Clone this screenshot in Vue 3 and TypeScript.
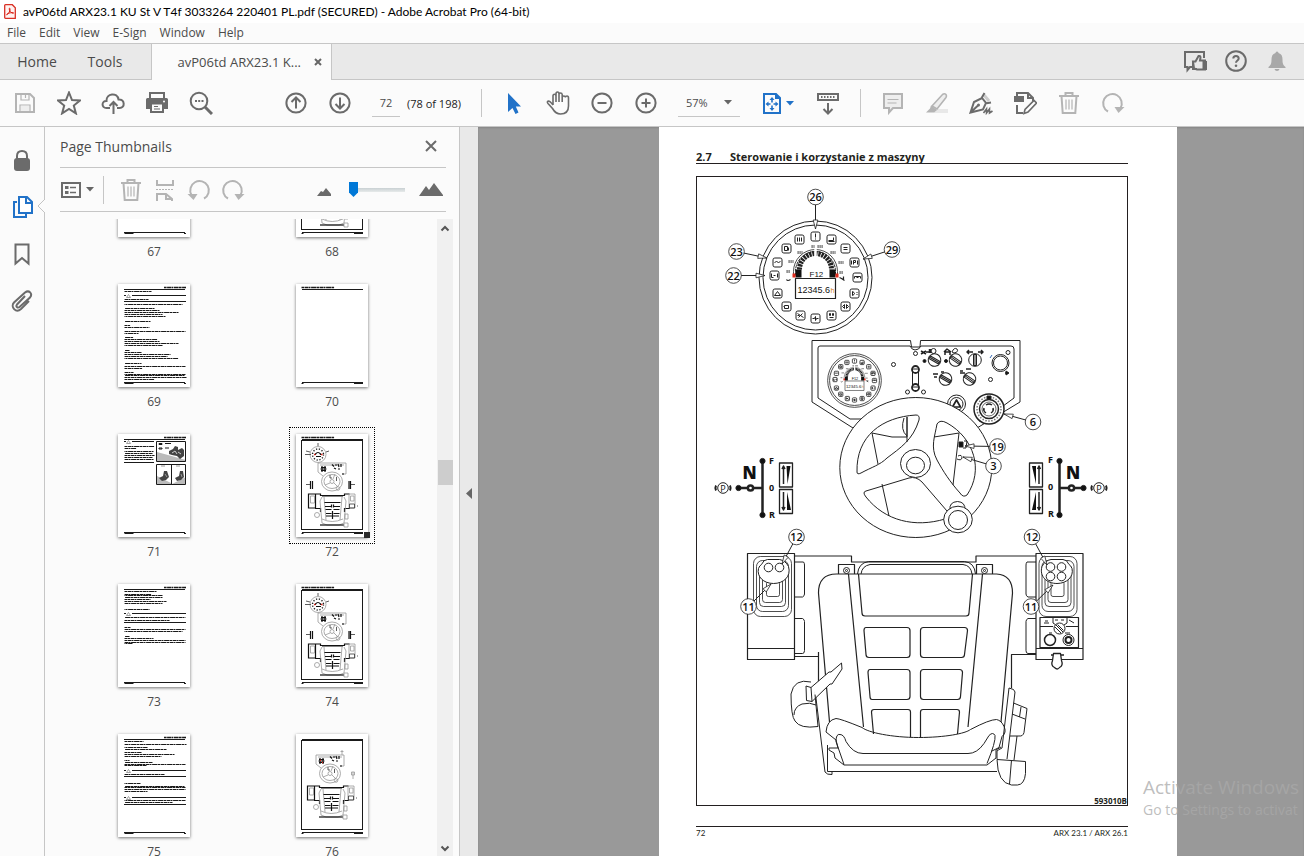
<script setup lang="ts">
import { ref } from 'vue'

interface Callout { n: number; x: number; y: number; tx: number; ty: number }
interface Row { y: number; w: number }
interface Thumb { page: number; kind: 'text' | 'blank' | 'controls' | 'controlsLow'; side: 'left' | 'right'; rows: Row[]; rules: number[]; warn: number[]; pictures?: boolean }

const menus = ['File', 'Edit', 'View', 'E-Sign', 'Window', 'Help']
const pageNumber = ref('72')
const zoom = ref('57%')
const thumbSize = ref(0)

const callouts: Callout[] = [
  { n: 26, x: 815.5, y: 197, tx: 815.5, ty: 229 },
  { n: 23, x: 736.5, y: 251.5, tx: 767, ty: 258 },
  { n: 22, x: 733.5, y: 275.5, tx: 765, ty: 275.5 },
  { n: 29, x: 892, y: 249.5, tx: 863, ty: 259 },
  { n: 6, x: 1033, y: 422, tx: 1004, ty: 414 },
  { n: 19, x: 997.5, y: 446.5, tx: 965, ty: 446 },
  { n: 3, x: 993.5, y: 466, tx: 963, ty: 457 },
  { n: 12, x: 796.5, y: 537, tx: 782, ty: 564 },
  { n: 11, x: 748.5, y: 606.5, tx: 771, ty: 584 },
  { n: 12, x: 1032, y: 537, tx: 1047, ty: 565 },
  { n: 11, x: 1031, y: 606.5, tx: 1053, ty: 585 },
]

function arrow(c: Callout): string {
  const dx = c.tx - c.x
  const dy = c.ty - c.y
  const len = Math.hypot(dx, dy)
  const ux = dx / len
  const uy = dy / len
  const bx = c.tx - ux * 9
  const by = c.ty - uy * 9
  return `${c.tx},${c.ty} ${bx - uy * 2.3},${by + ux * 2.3} ${bx + uy * 2.3},${by - ux * 2.3}`
}

const lamps = [
  [0, -41, 'M0-3v4M0 2v1'], [-16, -38, 'M-2-2v4M0-2v4M2-2v4'], [16, -38, 'M-3 1h5v-3M-3 2h6'], [-29, -29, 'M-2-2h3v4h-3zM2-1v3'],
  [30, -29, 'M-2-1h4M-2 1h4'], [-38, -15, 'M-3 0l2-1 2 1 2-1'], [39, -15, 'M-1-2v4M-1-2h2v2h-2M-3-2v4M3-2v4'], [-41, -2, 'M-3-2v4h2M3-2v4M-1 0h2'],
  [42, 0, 'M-3 1v-2h6v2M-1 0h2'], [-38, 16, 'M0-2l3 4h-6z'], [39, 16, 'M-2-2v4q4-2 0-4M2-1h1M2 1h1'], [-29, 29, 'M-3 0h1v2h4v-3h-4v1'],
  [30, 29, 'M-3 0l2-2v4zM3 0l-2-2v4z'], [-15, 38, 'M-3-2l6 4M-2 2l4-4M-3 0h2'], [16, 38, 'M-2-2h1v2h-1zM1-2h1v2h-1zM-2 2h4'], [0, 41, 'M-3 0h2l1-2v4l1-2h2'],
] as [number, number, string][]

const knobs: [number, number, number][] = [[934.5, 360, 30], [955.5, 360, 35], [975, 360, 90], [945.5, 379, 30], [969.5, 379, 35]]
const holes: [number, number][] = [[893.5, 364.5], [915.5, 353.5], [907.5, 392], [923.5, 392], [990.5, 379.5], [1008, 352.5]]

const many = (list: [number, number][]): Row[] => list.map(([y, w]) => ({ y, w }))

const thumbs: Thumb[] = [
  { page: 67, kind: 'blank', side: 'right', rows: [], rules: [], warn: [] },
  { page: 68, kind: 'controls', side: 'left', rows: [], rules: [], warn: [] },
  { page: 69, kind: 'text', side: 'right', rules: [17.5], warn: [11.5],
    rows: many([[7.5, 27], [15.5, 24], [20.5, 58], [24.5, 30], [26.5, 35], [28.5, 54], [30.5, 38], [32.5, 41], [37.5, 26], [41.5, 6], [43.5, 25], [47.5, 61], [49.5, 14], [53.5, 9], [55.5, 33], [57.5, 35], [59.5, 54], [61.5, 38], [66.5, 5], [68.5, 17], [70.5, 46], [72.5, 43], [74.5, 54], [79.5, 17], [82.5, 61], [84.5, 18], [88.5, 9], [90.5, 61], [91.5, 60], [93.5, 62], [95.5, 30]]) },
  { page: 70, kind: 'blank', side: 'left', rows: [], rules: [], warn: [] },
  { page: 71, kind: 'text', side: 'right', rules: [], warn: [7.5], pictures: true,
    rows: many([[12.5, 30], [14.5, 12], [17.5, 29], [19.5, 28], [21.5, 30], [23.5, 28], [25.5, 29]]) },
  { page: 72, kind: 'controls', side: 'left', rows: [], rules: [], warn: [] },
  { page: 73, kind: 'text', side: 'right', rules: [38.5], warn: [29.5],
    rows: many([[7.5, 32], [10.5, 27], [11.5, 38], [13.5, 38], [15.5, 26], [17.5, 42], [19.5, 38], [25.5, 25], [33.5, 61], [36.5, 45], [43.5, 6], [45.5, 61], [47.5, 58], [52.5, 5], [54.5, 29], [56.5, 61], [58.5, 61], [59.5, 8]]) },
  { page: 74, kind: 'controls', side: 'left', rows: [], rules: [], warn: [] },
  { page: 75, kind: 'text', side: 'right', rules: [42.5, 70.5], warn: [36.5, 63.5],
    rows: many([[7.5, 19], [10.5, 62], [13.5, 23], [15.5, 42], [18.5, 17], [20.5, 50], [22.5, 37], [26.5, 5], [28.5, 28], [30.5, 61], [31.5, 22], [40.5, 40], [49.5, 16], [52.5, 60], [53.5, 61], [55.5, 61], [57.5, 23], [66.5, 61], [68.5, 48]]) },
  { page: 76, kind: 'controlsLow', side: 'left', rows: [], rules: [], warn: [] },
]
</script>

<template>
  <div class="window">
    <header class="titlebar">
      <svg class="app-icon" viewBox="0 0 12 15"><path d="M1.5.7h6.8l3 3v10.6H1.5Q.7 14.300.7 13.500V1.500Q.7.7 1.500.7z" fill="#fff3f1" stroke="#d93025" stroke-width="1.300" /><path d="M3 10.500c2-1 3-3.500 3-5.500 0-1.500-1.300-1-.5 1 .8 2 2 3 3.500 3.300 1 .2.800-1-.7-.8-2 .2-4 .8-5 1.400-1 .600-.800 1.200-.3.600z" fill="none" stroke="#d91c10" stroke-width="1" /></svg>
      <h1>avP06td ARX23.1 KU St V T4f 3033264 220401 PL.pdf (SECURED) - Adobe Acrobat Pro (64-bit)</h1>
    </header>

    <nav class="menubar" aria-label="Menu">
      <button v-for="m in menus" :key="m" type="button">{{ m }}</button>
    </nav>

    <div class="tabs">
      <button type="button" class="tab home">Home</button>
      <button type="button" class="tab tools">Tools</button>
      <div class="tab-doc">
        <button type="button" class="tab-name">avP06td ARX23.1 K...</button>
        <button type="button" class="tab-close" aria-label="Close tab"><svg viewBox="0 0 8 8"><path d="M1 1l6 6M7 1L1 7" stroke="#666" stroke-width="2" /></svg></button>
      </div>
      <div class="tab-actions">
        <button type="button" aria-label="Feedback"><svg viewBox="0 0 24 24"><path d="M9 18H7l-2.500 3v-3H2V3h19v6" class="s" /><path d="M10 12v8h4M10 12.500h2.500l3-5.500q2-.5 2 1.500l-.5 3h5v9h-8l-3-1z" class="s on-bar" /><path d="M19.500 12H24v9h-4.500z" class="f" /></svg></button>
        <button type="button" aria-label="Help"><svg viewBox="0 0 24 24"><circle cx="12" cy="12" r="9.800" class="s" /><path d="M9.300 9.500c0-3.500 5.400-3.500 5.400 0 0 2-2.700 2-2.700 4.300" class="s" /><circle cx="12" cy="16.800" r="1.300" class="f" /></svg></button>
        <button type="button" aria-label="Notifications" class="off"><svg viewBox="0 0 24 24"><path d="M12 2.500q1.500 0 1.500 1.500c3 1 4 3 4 6.500 0 4 .5 5.500 3 7.500v1h-17v-1c2.500-2 3-3.500 3-7.500 0-3.500 1-5.500 4-6.500q0-1.500 1.500-1.500zM9.500 20h5q-.5 2-2.500 2t-2.500-2z" class="f" /></svg></button>
      </div>
    </div>

    <div class="toolbar">
      <div class="group">
        <button type="button" aria-label="Save" class="off"><svg viewBox="0 0 24 24"><path d="M3 3h14l4 4v14H3z" class="s" /><path d="M8 3v6h8V3M12.500 4v3M7 21v-7h10v7" class="s thin" /><path d="M8 15h8v5H8z" fill="#eee" /></svg></button>
        <button type="button" aria-label="Star"><svg viewBox="0 0 24 24"><path d="M12 1.500l3 7.500 8 .500-6.200 5.100 2.100 7.800L12 18l-6.900 4.400 2.100-7.800L1 9.500 9 9z" class="s" /></svg></button>
        <button type="button" aria-label="Upload"><svg viewBox="0 0 24 24"><path d="M9 17H5.500C0 17 .500 9.500 5.500 10 5 2 16.500 1 17.500 8.500 24 8 24.500 17 18.500 17H16M12.500 23V11M8.500 15l4-4 4 4" class="s" /></svg></button>
        <button type="button" aria-label="Print"><svg viewBox="0 0 24 24"><path d="M5 8V2h14v6" class="s" /><path d="M1 8.500q0-1.500 1.500-1.500h19q1.500 0 1.500 1.500V18h-4v4H5v-4H1z" class="f" /><path d="M7 13.500h10V20H7z" fill="#fbfbfb" /><path d="M9 15.500h4M9 18h6" class="s thin" /><circle cx="19" cy="10.500" r="1" fill="#fff" /></svg></button>
        <button type="button" aria-label="Find"><svg viewBox="0 0 24 24"><circle cx="10" cy="10" r="8.300" class="s" /><path d="M16 16l7 7" class="s wide" /><path d="M6 10h2M9.200 10h2M12.500 10h2" class="s" /></svg></button>
      </div>
      <div class="group nav">
        <button type="button" aria-label="Previous page"><svg viewBox="0 0 24 24"><circle cx="12" cy="12" r="9.600" class="s" /><path d="M12 17.500V7M7.500 11L12 6.500l4.500 4.500" class="s" /></svg></button>
        <button type="button" aria-label="Next page"><svg viewBox="0 0 24 24"><circle cx="12" cy="12" r="9.600" class="s" /><path d="M12 6.500V17M7.500 13l4.500 4.500 4.500-4.500" class="s" /></svg></button>
        <input v-model="pageNumber" type="text" aria-label="Page number" />
        <span class="count">(78 of 198)</span>
      </div>
      <div class="group framed">
        <button type="button" aria-label="Select"><svg viewBox="0 0 24 24"><path d="M6 2v19l4.500-4 3 6 3-1.500-2.700-6H19z" fill="#2172c8" /></svg></button>
        <button type="button" aria-label="Hand"><svg viewBox="0 0 24 24"><path d="M7 14V5q0-1.800 1.500-1.800T10 5v6V3q0-2 1.500-2T13 3v8-7.500q0-1.500 1.500-1.500T16.200 3.500V11 6.500q0-1.500 1.600-1.500T19.500 6.500M19.500 6q0-1 1.500-1t1.500 2V15c0 5-3 8-8 8-4 0-6-2-8-5.500l-4.500-5q-1.500-2 .5-2.500 1.500 0 4.500 4" class="s mid" /></svg></button>
        <button type="button" aria-label="Zoom out"><svg viewBox="0 0 24 24"><circle cx="12" cy="12" r="9.600" class="s" /><path d="M7.500 12h9" class="s" /></svg></button>
        <button type="button" aria-label="Zoom in"><svg viewBox="0 0 24 24"><circle cx="12" cy="12" r="9.600" class="s" /><path d="M7.500 12h9M12 7.500v9" class="s" /></svg></button>
        <label class="zoom">
          <select v-model="zoom" aria-label="Zoom level"><option>57%</option><option>100%</option></select>
          <svg viewBox="0 0 8 5"><path d="M0 0h8L4 4.500z" fill="#666" /></svg>
        </label>
        <button type="button" class="fit" aria-label="Fit page"><svg viewBox="0 0 24 24"><path d="M4 3h12l4 4v15H4z" class="s b" /><path d="M15 2v6h6z" fill="#2172c8" /><path d="M12 8.500v3M12 14.500v3M7.500 13h3M13.500 13h3" class="s b mid" /><path d="M12 6l2.500 3h-5zM12 20l2.500-3h-5zM5.500 13l3-2.500v5zM18.500 13l-3-2.500v5z" fill="#2172c8" /></svg><svg class="caret" viewBox="0 0 8 5"><path d="M0 0h8L4 4.500z" fill="#2172c8" /></svg></button>
        <button type="button" aria-label="Read mode"><svg viewBox="0 0 24 24"><path d="M2 3h20v6H2z" class="s" /><path d="M5 6h14" class="s" stroke-dasharray="1.500 1.500" /><path d="M12 12v10M7.500 18l4.500 4.500 4.500-4.500" class="s" /></svg></button>
      </div>
      <div class="group framed">
        <button type="button" aria-label="Comment" class="off"><svg viewBox="0 0 24 24"><path d="M3 3h18v14h-9l-4 4.500V17H3z" class="s pale" /><path d="M6.500 8.500h11M6.500 12h9" class="s thin" /></svg></button>
        <button type="button" aria-label="Highlight" class="off"><svg viewBox="0 0 24 24"><path d="M9 18h14v4H9z" fill="#e8e8e8" /><path d="M7 15l10.500-11.500q2-1.500 3.500 0 1 1.500 0 3L12 18z" class="s pale mid" /><path d="M6 14.500l6 4.500-3 2.500H1l4-4z" class="f" /></svg></button>
        <button type="button" aria-label="Sign"><svg viewBox="0 0 24 24"><path d="M15 4l5 6" stroke="#ccc" stroke-width="3" /><path d="M1.500 21.500L5 11l8-4 4 5-3 6.500zM1.500 21.500L9 14.500M12 8l3.500-6M16 12.500l6-1" class="s" /><circle cx="9.500" cy="14" r="1.500" class="f" /><path d="M14.500 22l3-4v4l3-4v4l3-2" class="s mid" /></svg></button>
        <button type="button" aria-label="Edit page"><svg viewBox="0 0 24 24"><path d="M4 5V2h11l5 5v3M4 14v8h6M15 2v5h5" class="s" /><path d="M1 5h10v6H1z" class="f" /><path d="M11 22.500l1-4L21 9.500l2.500 2.500L15 21z" class="s paper mid" /></svg></button>
        <button type="button" aria-label="Delete" class="off"><svg viewBox="0 0 24 24"><path d="M2 5h20M8.500 5V2h7v3M4.500 5l1.200 17h12.600L19.500 5" class="s" /><path d="M9 8.500v10M12 8.500v10M15 8.500v10" class="s thin" /></svg></button>
        <button type="button" aria-label="Rotate" class="off"><svg viewBox="0 0 24 24"><path d="M7 20.500A9.300 9.300 0 1 1 19.500 17" class="s" /><path d="M13.500 16l10 0-6 6z" class="f" /></svg></button>
      </div>
    </div>

    <div class="body">
      <nav class="rail" aria-label="Panels">
        <button type="button" aria-label="Security"><svg viewBox="0 0 24 24"><path d="M7 11V8q0-5 5-5t5 5v3" class="s" /><rect x="4" y="10" width="16" height="13" rx="3" class="f" /></svg></button>
        <button type="button" aria-label="Page Thumbnails" class="active"><svg viewBox="0 0 24 24"><path d="M7 7H4v15h12v-3" class="s b" /><path d="M9 2h8l5 5v11H9zM16 2v6h6" class="s b paper" /></svg></button>
        <button type="button" aria-label="Bookmarks"><svg viewBox="0 0 24 24"><path d="M5.500 2.500h13v19L12 16l-6.500 5.500z" class="s" /></svg></button>
        <button type="button" aria-label="Attachments"><svg viewBox="0 0 24 24"><path d="M15 7l-8 8.500c-1.500 2 .5 4 2.500 2.500L20 8.500c3-4-1-8-5-5L4 13.500c-4 4.500 2 11 7 6.500l8-8" class="s" /></svg></button>
      </nav>

      <aside class="panel">
        <svg class="pointer" viewBox="0 0 8 14"><path d="M8 0L1 7l7 7" fill="#fbfbfb" stroke="#c3c3c3" /></svg>
        <div class="panel-head">
          <h2>Page Thumbnails</h2>
          <button type="button" aria-label="Close panel"><svg viewBox="0 0 12 12"><path d="M1 1l10 10M11 1L1 11" class="s" /></svg></button>
        </div>
        <div class="panel-tools">
          <button type="button" class="options" aria-label="Options"><svg viewBox="0 0 22 18"><path d="M2 2h18v14H2z" class="s" /><path d="M5 5h3.500v3H5zM5 10h3.500v3H5z" class="f" /><path d="M10 6.500h6M10 11.500h6" class="s mid" /></svg><svg class="caret" viewBox="0 0 8 5"><path d="M0 0h8L4 4.500z" fill="#666" /></svg></button>
          <span class="bar"></span>
          <button type="button" class="off" aria-label="Delete pages"><svg viewBox="0 0 24 24"><path d="M2 5h20M8.500 5V2h7v3M4.500 5l1.200 17h12.600L19.500 5" class="s" /><path d="M9 8.500v10M12 8.500v10M15 8.500v10" class="s thin" /></svg></button>
          <button type="button" class="off" aria-label="Insert pages"><svg viewBox="0 0 24 24"><path d="M4 2v5h16V2M4 23v-7h9l6 5v2M13 16v5h6" class="s" /><path d="M3 11.500h18" class="s thin" stroke-dasharray="2 1" /></svg></button>
          <button type="button" class="off" aria-label="Rotate left"><svg viewBox="0 0 24 24"><path d="M17 20.500A9.300 9.300 0 1 0 4.500 17" class="s" /><path d="M10.500 16h-10l6 6z" class="f" /></svg></button>
          <button type="button" class="off" aria-label="Rotate right"><svg viewBox="0 0 24 24"><path d="M7 20.500A9.300 9.300 0 1 1 19.500 17" class="s" /><path d="M13.500 16h10l-6 6z" class="f" /></svg></button>
          <div class="size">
            <svg class="small" viewBox="0 0 14 8"><path d="M0 8l4-5 2 1 3-4 5 6v2z" class="f" /></svg>
            <input v-model="thumbSize" type="range" min="0" max="10" aria-label="Thumbnail size" />
            <svg class="large" viewBox="0 0 24 13"><path d="M0 13L7 3l3 4 5-7 9 12v1z" class="f" /></svg>
          </div>
        </div>

        <div class="list">
          <ol class="grid">
            <li v-for="t in thumbs" :key="t.page" :class="{ selected: t.page === 72 }">
              <svg class="thumb" viewBox="0 0 72 103">
                <g v-if="t.kind !== 'controlsLow'">
                  <path v-if="t.side === 'right'" d="M46 3.500h22" class="ink tx head" />
                  <path v-else d="M5.500 3.500h33" class="ink tx head" />
                </g>
                <path d="M6 5.500h61" class="ink" />
                <path d="M6 98.500h61" class="ink" />
                <path :d="t.side === 'right' ? 'M6.500 99.500h9M66 99.500h2' : 'M5.500 99.500h2M58 99.500h9'" class="ink" />
                <template v-if="t.kind === 'text'">
                  <path v-for="(r, i) in t.rows" :key="i" :d="`M6.500 ${r.y}h${r.w}`" class="ink tx" :stroke-dashoffset="i * 3" />
                  <path v-for="r in t.rules" :key="r" :d="`M6 ${r}h62`" class="ink" />
                  <path v-for="r in t.warn" :key="r" :d="t.pictures ? `M6 ${r}h2M14 ${r}h22` : `M6 ${r}h2M14 ${r}h54`" class="ink" />
                  <path v-for="r in t.warn" :key="'w' + r" :d="`M8.500 ${r + 2}l2-3 2 3z`" class="sign" />
                </template>
                <g v-if="t.pictures">
                  <path d="M6 28.500h30" class="ink" />
                  <path d="M39 18l29 8v2H39zM39 42l14 7v1H39zM54 50l14-7v7z" fill="#bbb" />
                  <path d="M38.500 7.500h29v20h-29zM38.500 30.500h29v20h-29zM53.500 30v20" class="ink" />
                  <path d="M51 17l4-2 2-3 3 1v3l4-2 2 2v6l-4 3-3-3-5-1-3-1z" fill="#444" />
                  <path d="M54 19l3-2 2 3M60 18l3 2" stroke="#ccc" fill="none" />
                  <path d="M41 9.500h3v1h-3zM47 9.500h6M41 14h3v1h-3zM47 14h4" class="ink" />
                  <path d="M41 44l4-2 1-5h3l2 6-3 3-4 1zM57 44l4-2 1-5h3l1 6-3 3-4 1z" fill="#444" />
                  <path d="M43 32h4M58 32h4M47 40l2 3M63 40l1 3" stroke="#999" />
                </g>
                <g v-if="t.kind === 'controls' || t.kind === 'controlsLow'">
                  <rect x="5.500" y="6.500" width="61" height="89" class="ink" />
                  <g v-if="t.kind === 'controls'" class="soft">
                    <circle cx="22" cy="20.500" r="8" /><g class="dots"><circle cx="22" cy="20.500" r="5.500" /></g>
                    <g class="deep"><path d="M10 17l4 1M9 20.500h6M33 17l-3 1M22 9v3M10 50.500h4M54 50.500h5" /></g>
                    <g class="bold"><path d="M19.500 21v-1q2.500-3 5 0v1M14.500 47v8M16.500 47v8M53 47v8M54.500 47v8M20 22.500h5" /></g>
                    <g class="red"><path d="M18 20.500h1.500M25 20.500h1.500" /></g>
                  </g>
                  <g :transform="t.kind === 'controlsLow' ? 'translate(-2 -8)' : undefined" class="soft">
                    <path d="M22 29h28v11H46M22 29v9l5 4M24 31h24" />
                    <g class="bold"><path d="M25 33.500h5M24.500 35h6M25 36.500h5M26 32v6M29 32v6M36 30.500l2 2M39 31h2M42 30l1 3M45 30v3M38 34l2 1M42 35h2M46 40h2" /></g>
                    <g v-if="t.kind === 'controlsLow'" class="red"><path d="M26 34.500h1M28 36.500h1" /></g>
                    <ellipse cx="36" cy="47.500" rx="10.500" ry="9.500" /><ellipse cx="36" cy="47.500" rx="8" ry="7" /><circle cx="36" cy="47.500" r="2" />
                    <path d="M29 51l5-2M38 49l4 4M37 45l2-5" />
                    <g class="deep"><path d="M40.500 43v4M34 41v3h2" /></g><circle cx="42" cy="54.500" r="1.800" />
                  </g>
                  <g :transform="t.kind === 'controlsLow' ? 'translate(-1 -8)' : undefined" class="soft">
                    <g class="bold"><path d="M12.500 60h7v14h-7zM19.500 60h5v1.500h24V60h5M19 74.500h5.500M48 74.500h6M24.500 74v4M48.500 74v4M26 62h21" /></g>
                    <path d="M14.500 62h4v7h-4zM53 60h6v14h-6zM54.500 62h3.500v5h-3.500z" />
                    <g class="deep"><path d="M53.500 70h5v4h-5zM61 72h1" /></g><path d="M26 63l-2 4 2 22 5 2h12l5-2 2-22-2-4M28 63l2 23M46 63l-2 23M26 85q10 5 21 0" />
                    <g class="bold"><path d="M28.500 68.500h16M29 72.500h6.500M37.500 72.500h6.500M29.500 75.500h6M37.500 75.500h6M30 79.500h5.500M37.500 79.500h6M30 82h13M35.500 70.500v3M37.500 70.500v3M36.500 77v8" /></g>
                    <g class="bold"><path d="M24 91h24" /></g><circle cx="21" cy="81" r="2.500" /><path d="M49 80h3v5h-3zM48 89h4v4h-4z" />
                  </g>
                  <path v-if="t.kind === 'controlsLow'" d="M46 16v5M44.500 17.500h3M57 38v7M55.500 38h3v3h-3z" class="soft" />
                </g>
              </svg>
              <span>{{ t.page }}</span>
            </li>
          </ol>
          <div class="scroll" aria-hidden="true">
            <svg viewBox="0 0 8 5"><path d="M.5 4.500L4 1l3.500 3.500" class="s" /></svg>
            <i></i>
            <svg viewBox="0 0 8 5"><path d="M.5.5L4 4 7.500.5" class="s" /></svg>
          </div>
        </div>
      </aside>

      <button type="button" class="splitter" aria-label="Collapse panel"><svg viewBox="0 0 6 11"><path d="M6 0v11L0 5.500z" fill="#666" /></svg></button>

      <main class="viewer">
        <article class="sheet">
          <h3><span>2.7</span>Sterowanie i korzystanie z maszyny</h3>
          <figure>
            <svg class="drawing" viewBox="697 177 430 628" role="img" aria-label="Sterowanie">
              <defs>
                <g id="gauge">
                  <circle r="56.500" /><circle r="52.500" />
                  <g v-for="(l, i) in lamps" :key="i" :transform="`translate(${l[0]} ${l[1]})`"><rect x="-4.500" y="-4.500" width="9" height="9" rx="1.800" /><path :d="l[2]" /></g>
                  <path d="M-22-1v-5a22 22 0 0 1 44 0v5" stroke-width=".8" /><path d="M-20-2v-4a20 20 0 0 1 40 0v4" stroke-width="1" stroke-dasharray="3 .7" />
                  <path d="M-16-8a16 16 0 0 1 32 0" stroke-width="5" stroke-dasharray="2.300 .8" />
                  <path d="M0-31v11" stroke="#fff" stroke-width="2.500" />
                  <path d="M-20-8h6v8h-6zM14-8h6v8h-6z" fill="#111" stroke="none" /><path d="M-23-4h3v4h-3zM20-4h3v4h-3z" fill="#e12b1c" stroke="none" />
                  <rect x="-20" y="1" width="40" height="20" stroke-width="1.200" />
                  <text x="-6" y="-1" class="seg">F12</text><text x="-18" y="15" class="lcd">12345.6</text><text x="15" y="15" class="hour">h</text>
                  <path d="M-29-6h4M-27-16h5M-18-25h5M-4-31h3M2-31h6M15-25h5M23-15h5M24-5h4" stroke-width="3" stroke="#666" stroke-dasharray="1.200 .8" />
                  <path d="M24 0l4 2v-3M26 1l3 2M-29 2q1 2 4 0" stroke-width="1.200" />
                </g>
                <g id="lever">
                  <path d="M0-27V27M0 0H-24" stroke-width="2.500" /><circle cy="-27" r="2.600" fill="#111" /><circle cy="27" r="2.600" fill="#111" /><circle cx="-24" r="2.600" fill="#111" /><circle cx="-12" r="2.600" fill="#fff" stroke-width="2.500" />
                  <circle cx="-39.500" r="5.300" /><path d="M-46.500-2.500q-1.200 2.500 0 5M-32.500-2.500q1.200 2.500 0 5" stroke-width="2" />
                </g>
                <g id="arm">
                  <path d="M47 8.500h9q1 1 1 3v29q0 2-2 3h-8M47 65h8q2 1 2 3v29q0 3-2 3h-8" />
                  <rect width="47" height="106" fill="#fff" stroke-width="1.200" /><path d="M0 95h47" stroke-width="1.200" />
                  <g stroke-width=".8"><rect x="6" y="3" width="38" height="60" rx="7" /><rect x="9" y="7" width="32" height="51" rx="6" /><rect x="12" y="13" width="26" height="40" rx="4" /><rect x="15" y="18" width="20" height="31" rx="3" /><rect x="19" y="28" width="13" height="15" rx="2" /></g>
                  <path d="M14 11q2-5 6-5h12q6 1 9 7c3 10-5 17-15 17s-17-7-15-15q1-3 3-4z" fill="#fff" />
                </g>
              </defs>

              <use href="#gauge" transform="translate(815.500 277.500)" />

              <path d="M853 428l-41-26V340.500h98.500l1 6.500h8.500l.5-6.500h99.500V402l-43 26" />
              <path d="M862 419h-12l-32-21v-50q0-2 2-2h90q2 4 5 4 4 0 6-4h90q3 0 3 3v49l-15 11q-1 8-20 12" />
              <use href="#gauge" class="heavy" transform="translate(854.500 380.500) scale(.475)" />
              <circle v-for="(h, i) in holes" :key="'h' + i" :cx="h[0]" :cy="h[1]" r="2" />
              <path d="M912.500 369h6v18h-6z" fill="#fff" /><circle cx="915.500" cy="369.500" r="3.500" stroke-width="1.800" /><circle cx="915.500" cy="387.500" r="3.500" stroke-width="1.800" />
              <g v-for="(k, i) in knobs" :key="'k' + i" :transform="`translate(${k[0]} ${k[1]}) rotate(${k[2]})`"><circle r="6.300" /><path d="M-5.500-1.500h11v3h-11zM-5 0h10" /></g>
              <path d="M921 354l5-3M921 351l5 3M926 352h3M945 355v-3h5v3M944 352l3-3 4 3M968 352h5M978 352h5M969 350l-2 2 2 2M981 350l2 2-2 2M933 374h5M934 377h3M941 372h3M960 373h5M960 371h3M966 369h5M1005 373h3" stroke-width="1.500" />
              <circle cx="933.500" cy="351" r="2.500" /><path d="M930 349v4" stroke-width="2.500" /><path d="M952 352q2-5 5-3 2 3-3 4z" /><circle cx="924.500" cy="361" r="1.500" fill="#111" /><circle cx="946" cy="361" r="1.500" fill="#111" />
              <circle cx="1000.500" cy="363" r="8.500" /><circle cx="1000.500" cy="363" r="7" />
              <path d="M992 355l-2 3" stroke="#3368b5" /><path d="M1006 371l3 2-3 2z" fill="#111" />
              <circle cx="956.500" cy="404" r="9" /><circle cx="956.500" cy="404" r="6.500" /><path d="M956.500 400l4 7h-8z" stroke-width="1.700" />
              <circle cx="989" cy="409" r="15" fill="#fff" stroke-width="1.500" /><circle cx="989" cy="409" r="12" stroke-dasharray="1.500 1.500" stroke-width="1.500" stroke="#777" /><circle cx="989" cy="409" r="9.500" stroke-width="1.500" /><circle cx="989" cy="409" r="7" stroke-width=".7" />
              <path d="M986 405q3-2 6 0M993 408q1 3-2 5M986 413q-3-2-2-5" stroke-width="1.500" /><path d="M987 396h4v3h-4z" fill="#111" />

              <ellipse cx="915.800" cy="467.500" rx="76" ry="70" fill="#fff" />
              <path d="M857 472C856 436 882 417 916 415q4 0 3 5c-6 20-19 28-32 38-7 7-15 9-26 15q-4 2-4-1z" />
              <path d="M937 424q3-5 10-1c27 15 37 47 20 72q-4 3-7-2c-10-11-17-22-23-33-7-13-2-24 0-36z" />
              <path d="M947 511l-25-29q-6-6-13-4l-43 13q-4 1 0 6c19 24 49 31 79 22" />
              <path d="M872 433l20 4h15v-20v25M872 433l6 31M904 418q-4 12 3 18M934 437l25-4-6 52M882 484l7 32" />
              <path d="M959 442h4v5h-4z" fill="#111" /><path d="M964 441h3l-1 7h-3M958 456q4-2 4 2-1 3-5 1" />
              <ellipse cx="915.500" cy="463.500" rx="15" ry="14" fill="#fff" /><ellipse cx="915.500" cy="465.500" rx="9" ry="8.300" />
              <path d="M950 510q-1-8 7.500-8.500 8 .500 7.500 8.500" fill="#fff" /><ellipse cx="958" cy="519.500" rx="14.300" ry="13.300" fill="#fff" /><circle cx="958" cy="520" r="9.500" />

              <use href="#lever" transform="translate(762.500 488)" />
              <use href="#lever" transform="translate(1059.500 488) scale(-1 1)" />
              <g v-for="bx in [779.5, 1029.5]" :key="bx">
                <rect :x="bx" y="463" width="13" height="24" stroke-width="1.300" /><rect :x="bx" y="489.500" width="13" height="24" stroke-width="1.300" />
              </g>
              <path d="M783.500 484v-17M782 469l1.500-3 1.500 3M783.500 492v17M782 507l1.500 3 1.500-3M1039 484v-17M1037.500 469l1.500-3 1.500 3M1039 492v17M1037.500 507l1.500 3 1.500-3" stroke-width="1.500" />
              <path d="M786.500 466h4l-3 18zM787 492l4 18h-4zM1032 466h4v18zM1036 492v18h-4z" fill="#111" stroke="none" />
              <text x="742.500" y="478.500" class="big">N</text><text x="1066" y="478.500" class="big">N</text>
              <text x="769" y="464" class="mark">F</text><text x="769" y="491" class="mark">0</text><text x="769" y="518" class="mark">R</text>
              <text x="1048" y="463" class="mark">F</text><text x="1048" y="490" class="mark">0</text><text x="1048" y="517" class="mark">R</text>
              <text x="723" y="491.500" class="park">P</text><text x="1099" y="491.500" class="park">P</text>

              <path d="M795 556h56.500v6h124.500v-6h60M795 656.500h23.500M818.500 652v35M1036 654.500h-24.500V688" stroke-width="1.200" />
              <use href="#arm" transform="translate(747.500 553.500)" />
              <g transform="translate(1083 553.500) scale(-1 1)"><use href="#arm" /></g>
              <circle cx="768.500" cy="567.500" r="4.300" /><circle cx="779.500" cy="567.500" r="4.300" />
              <circle cx="1050.500" cy="567" r="4.300" /><circle cx="1061.500" cy="567" r="4.300" /><circle cx="1050.500" cy="576.500" r="4.300" /><circle cx="1061.500" cy="576.500" r="4.300" />
              <rect x="1040" y="617.500" width="38.500" height="30" fill="#fff" stroke-width="1.200" /><path d="M1040 626.500h13M1066 626.500h12.500M1053 618v5l3 2M1067 618v5l-3 2M1044 623h5M1045 621h3M1069 620l5 3M1055 620h3M1061 620h3M1049 633h3M1065 633h5" />
              <circle cx="1059.500" cy="628.500" r="5.500" fill="#fff" /><path d="M1056 625l7 7M1057.500 624.500l6 6M1055 627l6 6" /><circle cx="1050" cy="640" r="5.500" stroke-width="1.500" /><circle cx="1068.500" cy="640" r="5.500" /><circle cx="1068.500" cy="640" r="3" stroke-width="2" />
              <path d="M1053.500 653.500h7l1 7q2 5-2 7-2 3-5 0-4-2-2-7zM1051 655h2M1061 655h3" fill="#fff" stroke-width="1.300" />

              <path d="M857.500 574q1-11 11-12.500h96q10 1 11 12.500M861 574q1-8 9-9.500h93q8 1 9 9.500" />
              <path d="M838.500 574v-9.500h16v9.500M976.500 574v-9.500h16v9.500" stroke-width="1.200" /><circle cx="846.500" cy="570.500" r="3" /><circle cx="984.500" cy="570.500" r="3" /><circle cx="846.500" cy="570.500" r="1" /><circle cx="984.500" cy="570.500" r="1" />
              <path d="M829.500 722l-11-129q0-19 18-19h160q16 1 16 19l-11.500 129" stroke-width="1.200" />
              <path d="M848.500 574l15 153M982.500 574l-14.500 153M858.500 574l3.500 39q0 3 3 3h101q3 0 3-3l3.500-39" stroke-width="1.200" />
              <path d="M866 627.500h41q3 0 3 3v24q0 3-3 3h-38q-3 0-3-3l-2-24q0-3 2-3zM923.500 627.500h41q3 0 3 3l-3 24q0 3-3 3h-38q-3 0-3-3v-24q0-3 3-3zM870 669.500h37q3 0 3 3v24q0 3-3 3h-35q-2 0-2-3l-2-24q0-3 2-3zM923.500 669.500h36q3 0 3 3l-2 24q0 3-3 3h-34q-3 0-3-3v-24q0-3 3-3zM873.500 734l-2-22q0-2.500 2.500-2.500h34q2.500 0 2.500 2.500v25M920.500 737v-25q0-2.500 2.500-2.500h34q2.500 0 2.500 2.500l-2 22" stroke-width="1.200" />
              <path d="M826 732q1-12 10-13.500 4 0 26 9c6 5 30 10 56.500 10s47-4 52-8q19-10 26-10 5 1 7.500 7 3 6-2 10l-3 11-8 4" />
              <path d="M826 732l10 8 2 8-9 0v2l5 3 1 5 9 7h143l9-7v-8l5-3" />
              <path d="M844 764.500l-8-23q0-8 4-7 4 0 6 7 7 12 17 12h105q9 0 16-10l5-8q4-4 6 0 1 6-8 28" />
              <path d="M827.500 745v26.500H997M815 690l10 82q2 3 7 2.500v-2.500M820 640" />
              <path d="M1009 688q6 1 6 4l-8 67M1009 688l-7 60q-4 2-5 3v8M1013.500 703l13.500 5.500-3 24q-1 4-5 3.500h-9M1012 714l13 5M1021 707l-1.500 10M1017 736l-3 24" />
              <path d="M997 759.500l28.500 2v12q-1 11-8 11.500h-6q-14-2-14.500-25.500zM1011.500 760l-2 24" />
              <path d="M811 682q-17-4-20 12 0 22 4 27 5 8 23 5.500l-3-32M794 715q0-8 8-11 8-2 14 1M806 686l5 1.500 18-15.500h2l10.500-9 .5 6-10 15h-2l-18 17.500-5.500-1zM811 687.500l1 14" fill="#fff" />

              <g v-for="(c, i) in callouts" :key="'c' + i">
                <path :d="`M${c.x} ${c.y}L${c.tx} ${c.ty}`" stroke-width="1" />
                <polygon :points="arrow(c)" fill="#fff" stroke-width=".8" />
                <circle :cx="c.x" :cy="c.y" r="7.800" fill="#fff" stroke-width=".8" />
                <text :x="c.x" :y="c.y + 4" class="num">{{ c.n }}</text>
              </g>
            </svg>
            <figcaption>593010B</figcaption>
          </figure>
          <footer><span>72</span><span>ARX 23.1 / ARX 26.1</span></footer>
        </article>
        <div class="watermark"><p>Activate Windows</p><p>Go to Settings to activat</p></div>
      </main>
    </div>
  </div>
</template>

<style>
html, body { margin: 0; height: 100%; }
#app { height: 100%; }
</style>

<style scoped>
.window { display: flex; flex-direction: column; height: 100vh; overflow: hidden; background: #fbfbfb; color: #4b4b4b; font-family: "Open Sans", "Noto Sans", sans-serif; font-size: 12px; }
h1, h2, h3, p, ol, figure { margin: 0; padding: 0; font-weight: 400; }
button { border: 0; background: none; padding: 0; font: inherit; display: flex; align-items: center; justify-content: center; color: #6b6b6b; }
button svg { display: block; width: 24px; height: 24px; }
.off { color: #b4b4b4; }
.s { fill: none; stroke: currentColor; stroke-width: 2; }
.s.thin { stroke-width: 1.2; }
.s.mid { stroke-width: 1.6; }
.s.wide { stroke-width: 3; }
.s.paper { fill: #fff; }
.s.pale { fill: #eee; }
.s.on-bar { fill: #e9e9e9; }
.s.b { stroke: #2172c8; }
.f { fill: currentColor; }

.titlebar { display: flex; align-items: center; gap: 7px; height: 23px; padding-left: 4px; background: #fff; color: #000; }
.app-icon { width: 12px; height: 15px; }
h1 { font-family: Lato, "Open Sans", sans-serif; font-size: 12px; white-space: nowrap; }
.menubar { display: flex; align-items: center; gap: 13px; height: 18px; padding: 0 0 2px 7px; }
.menubar button { color: #4b4b4b; }
.tabs { display: flex; height: 35px; background: #e9e9e9; border-top: 1px solid #c6c6c6; border-bottom: 1px solid #c6c6c6; }
.tab { font-size: 14px; color: #4b4b4b; }
.home { width: 74px; }
.tools { width: 62px; margin-right: 15px; }
.tab-doc { display: flex; align-items: center; justify-content: flex-end; gap: 13px; width: 170px; padding-right: 9px; margin-bottom: -1px; background: #fbfbfb; border-left: 1px solid #c6c6c6; border-right: 1px solid #c6c6c6; }
.tab-name { font-size: 13px; color: #4b4b4b; white-space: nowrap; }
.tab-close svg { width: 8px; height: 8px; }
.tab-actions { display: flex; gap: 17px; margin-left: auto; padding: 0 15px 2px 0; }
.tab-actions .off { color: #a8a8a8; }

.toolbar { display: flex; align-items: center; height: 46px; padding-left: 3px; border-bottom: 1px solid #c6c6c6; }
.group { display: flex; align-items: center; }
.group button { width: 44px; height: 44px; }
.nav { margin-left: 51px; margin-right: 20px; }
.nav input { width: 28px; height: 27px; margin: 0 7px 0 10px; padding: 0; box-sizing: border-box; border: 0; border-bottom: 1px solid #c6c6c6; background: none; font: inherit; font-size: 11px; color: #4b4b4b; text-align: center; }
.count { font-size: 11px; color: #1c1c1c; white-space: nowrap; }
.framed { border-left: 1px solid #c6c6c6; height: 28px; padding-left: 10px; margin-right: 10px; }
.framed:last-child { margin: 0; }
.zoom { position: relative; display: flex; align-items: center; margin: 0 10px; width: 62px; height: 27px; border-bottom: 1px solid #c6c6c6; }
.zoom select { appearance: none; width: 100%; border: 0; padding: 0 0 0 8px; background: none; font: inherit; font-size: 11px; color: #4b4b4b; }
.zoom svg { position: absolute; right: 8px; width: 8px; height: 5px; pointer-events: none; }
.group .fit { width: 54px; margin-right: 2px; gap: 2px; }
.caret, button .caret { width: 8px; height: 5px; }

.body { display: flex; flex: 1; min-height: 0; }
.rail { display: flex; flex-direction: column; align-items: center; gap: 23px; width: 44px; padding-top: 21px; border-right: 1px solid #c6c6c6; }
.panel { position: relative; display: flex; flex-direction: column; width: 414px; border-right: 1px solid #c6c6c6; }
.pointer { position: absolute; left: -8px; top: 71px; width: 8px; height: 16px; }
.panel-head { display: flex; align-items: center; justify-content: space-between; height: 38px; margin: 0 13px 0 15px; padding: 0 9px 2px 0; border-bottom: 1px solid #c6c6c6; }
h2 { font-size: 14px; color: #4b4b4b; }
.panel-head svg { width: 12px; height: 12px; }
.panel-tools { display: flex; align-items: center; gap: 10px; height: 43px; margin: 0 13px 0 15px; border-bottom: 1px solid #c6c6c6; }
.panel-tools .options svg:first-child { width: 22px; height: 18px; }
.options { gap: 4px; }
.bar { width: 1px; height: 28px; margin: 0 5px 0 -1px; background: #c6c6c6; }
.size { display: flex; align-items: center; gap: 18px; margin-left: auto; color: #6b6b6b; padding-right: 3px; }
.small { width: 14px; height: 8px; margin-top: 4px; }
.large { width: 24px; height: 13px; margin-left: -4px; }
.size input { appearance: none; width: 56px; height: 15px; margin: 0; background: linear-gradient(#c9d0d3, #e7eaea) center / 100% 4px no-repeat; }
.size input::-webkit-slider-thumb { appearance: none; width: 9px; height: 15px; background: #0078d7; clip-path: polygon(0 0, 100% 0, 100% 70%, 50% 100%, 0 70%); }
.list { display: flex; flex: 1; min-height: 0; margin-top: 7px; overflow: hidden; }
.grid { display: grid; grid-template-columns: 178px 178px; grid-auto-rows: 150px; margin: -85px 0 0 20px; list-style: none; }
.grid li { position: relative; display: flex; flex-direction: column; align-items: center; gap: 10px; line-height: 9px; color: #4b4b4b; }
.thumb { width: 72px; height: 103px; background: #fff; box-shadow: 0 1px 3px rgba(0, 0, 0, .55); }
.selected::before { content: ""; position: absolute; left: 46px; top: -7px; width: 84px; height: 115px; border: 1px dotted #000; }
.selected::after { content: ""; position: absolute; left: 121px; top: 98px; width: 6px; height: 6px; background: #2b2b2b; }
.ink { fill: none; stroke: #1a1a1a; stroke-width: 1; }
.tx { stroke-dasharray: 2.6 .5 4 .4 1.5 .6 5 .4; }
.head { stroke-width: 1.6; }
.sign { fill: #fff; stroke: #888; stroke-width: .8; }
.soft { fill: none; stroke: #979797; stroke-width: .8; }
.deep { stroke: #333; }
.bold { stroke: #111; stroke-width: 1.2; }
.dots { stroke: #222; stroke-width: 1.4; stroke-dasharray: 1.2 1.7; }
.red { stroke: #e12b1c; stroke-width: 1.4; }
.scroll { display: flex; flex-direction: column; align-items: center; width: 16px; margin-left: auto; margin-right: 6px; padding: 7px 0 5px; background: #f0f0f0; color: #555; }
.scroll svg { width: 8px; height: 5px; overflow: visible; }
.scroll i { width: 15px; height: 25px; background: #cdcdcd; margin: 229px 0 auto; flex: none; }
.splitter { width: 18px; padding-top: 4px; background: #e9e9e9; }
.splitter svg { width: 6px; height: 11px; }

.viewer { position: relative; display: flex; justify-content: center; flex: 1; min-width: 0; overflow: hidden; padding-left: 54px; background: #999; box-shadow: inset 0 1px 2px #858585; }
.sheet { display: flex; flex-direction: column; width: 432px; padding: 23px 49px 0 37px; background: #fff; color: #231f20; }
h3 { display: flex; align-items: flex-end; height: 13px; border-bottom: 1px solid #231f20; font-size: 11px; line-height: 13px; font-weight: 700; white-space: nowrap; }
h3 span { width: 34px; }
figure { position: relative; margin-top: 12px; border: 1px solid #231f20; }
.drawing { display: block; width: 100%; fill: none; stroke: #222; stroke-width: 1; stroke-linejoin: round; }
.heavy { stroke-width: 1.7; }
.drawing text { fill: #111; stroke: none; font-family: "Open Sans", sans-serif; }
.drawing .num { font-size: 11px; font-weight: 600; text-anchor: middle; }
.drawing .big { font-size: 17px; font-weight: 800; }
.drawing .mark { font-size: 9px; font-weight: 700; }
.drawing .park { font-size: 9px; text-anchor: middle; }
.drawing .seg { font-size: 8px; font-family: "Liberation Sans", sans-serif; }
.drawing .lcd { font-size: 9px; font-family: "Liberation Sans", sans-serif; }
.drawing .hour { font-size: 7px; fill: #d57a20; }
figcaption { position: absolute; right: 0; bottom: 0; font-size: 8px; line-height: 9px; font-weight: 700; }
.sheet footer { display: flex; justify-content: space-between; margin-top: 20px; border-top: 1px solid #231f20; font-family: Lato, "Open Sans", sans-serif; font-size: 8px; line-height: 12px; }
.watermark { position: absolute; left: 665px; top: 647px; color: rgba(169, 169, 169, .76); white-space: nowrap; }
.watermark p { font-size: 19px; line-height: 26px; }
.watermark p + p { font-size: 14px; line-height: 20px; }
</style>
